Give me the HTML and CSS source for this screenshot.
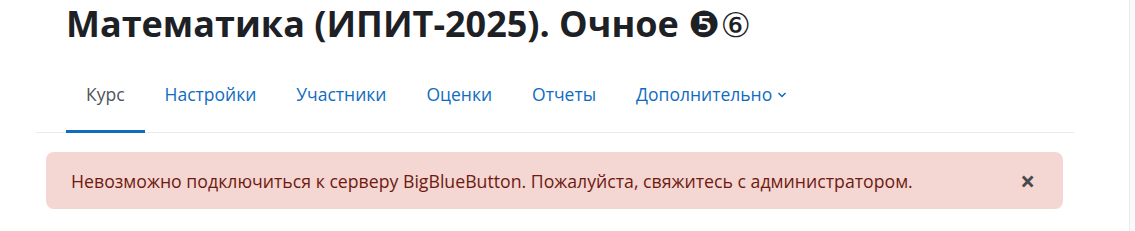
FILE: index.html
```html
<!DOCTYPE html>
<html lang="ru">
<head>
<meta charset="utf-8">
<title>Математика</title>
<link rel="stylesheet" href="styles.css">
</head>
<body>
<div class="page">
  <main class="main">
    <h1 class="title">Математика (ИПИТ-2025). Очное <span class="badges"><span class="b5">❺</span><span class="b6">⑥</span></span></h1>
    <nav class="tabs">
      <a class="tab active">Курс</a>
      <a class="tab">Настройки</a>
      <a class="tab">Участники</a>
      <a class="tab">Оценки</a>
      <a class="tab">Отчеты</a>
      <a class="tab">Дополнительно<svg class="chev" width="10" height="8" viewBox="0 0 10 8"><path d="M1.5 2 L5 5.5 L8.5 2" fill="none" stroke="currentColor" stroke-width="1.5"/></svg></a>
    </nav>
    <div class="alert">
      <span class="alert-text">Невозможно подключиться к серверу BigBlueButton. Пожалуйста, свяжитесь с администратором.</span>
      <span class="close">×</span>
    </div>
  </main>
  <aside class="side"></aside>
</div>
</body>
</html>
```
FILE: styles.css
```css
html, body { margin: 0; padding: 0; background: #fff; }
body { font-family: "Open Sans", "Liberation Sans", sans-serif; color: #1d2125; }
.page { display: flex; height: 231px; overflow: hidden; }
.main { width: 1129px; padding: 0 0 0 36px; box-sizing: border-box; }
.side { flex: 1; background: #f8f9fa; border-left: 1px solid #e9ecef; }
.title { margin: 0; padding: 1px 0 0 30px; font-size: 36px; font-weight: 700; line-height: 45px; color: #1d2125; white-space: nowrap; }
.badges { font-family: "DejaVu Sans", sans-serif; font-weight: 400; }
.b5 { font-size: 36px; }
.b6 { font-size: 34px; }
.tabs { display: flex; width: 1038px; border-bottom: 1px solid #e9ecef; margin-top: 26px; padding-left: 30px; box-sizing: border-box; }
.tab { display: flex; align-items: flex-start; padding: 9px 20px 0; height: 59px; box-sizing: border-box; font-size: 17.5px; line-height: 22px; color: #0f6cbf; border-bottom: 3px solid transparent; margin-bottom: -1px; }
.tab.active { color: #4f5459; border-bottom-color: #0f6cbf; }
.chev { margin: 8px 0 0 5px; }
.alert { display: flex; align-items: center; justify-content: space-between; margin: 19px 0 0 10px; width: 1017px; height: 57px; box-sizing: border-box; padding: 0 28px 0 25px; background: #f4d6d2; border-radius: 8px; color: #6e1a11; font-size: 17.7px; }
.close { color: #4a4a4a; font-size: 26px; font-weight: 700; line-height: 1; }
```
